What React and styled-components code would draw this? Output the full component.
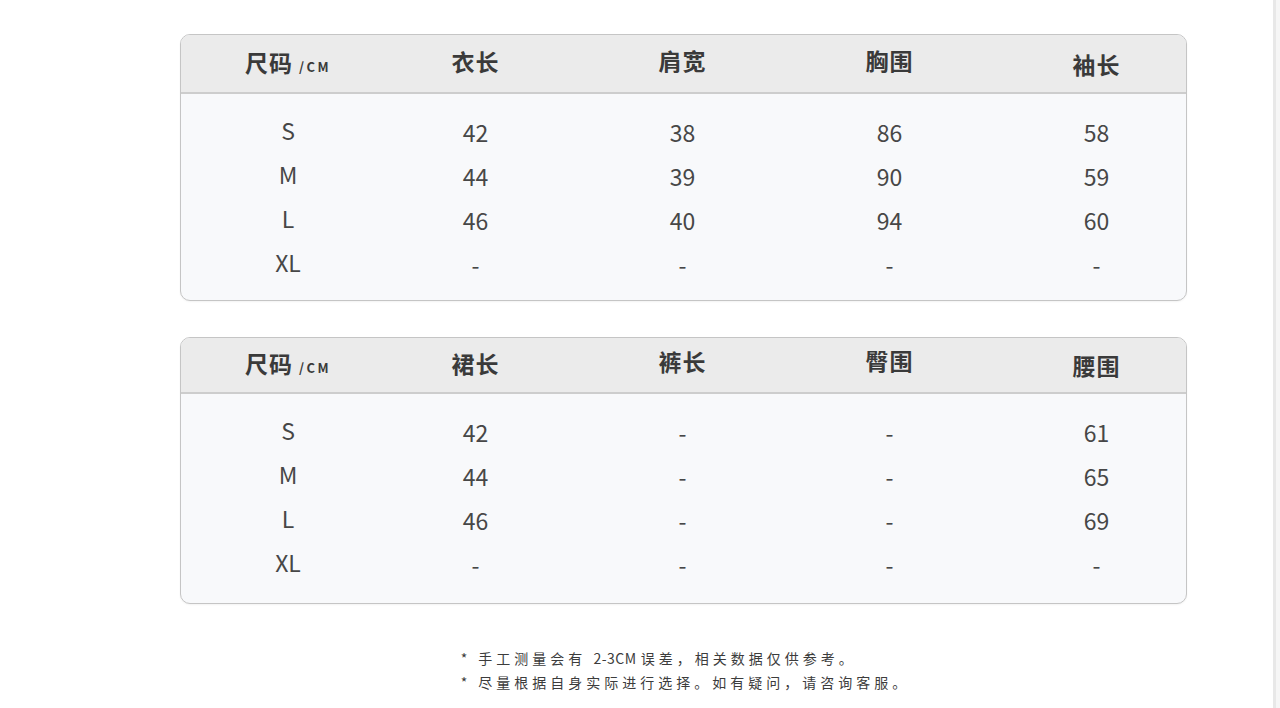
import React from "react";
import styled, { createGlobalStyle } from "styled-components";

const Global = createGlobalStyle`
  html, body { margin: 0; padding: 0; background: #ffffff; }
  body { font-family: "Noto Sans CJK SC", "Noto Sans", sans-serif; }
`;

const Page = styled.div`
  display: flex;
  width: 1280px;
  height: 708px;
  overflow: hidden;
  background: #ffffff;
`;

const Main = styled.main`
  flex: 1;
  padding: 34px 0 0 180px;
  display: flex;
  flex-direction: column;
  gap: 36px;
`;

const Strip = styled.div`
  width: 4px;
  border-left: 3px solid #e8e8e8;
  background: #f6f6f6;
`;

const Table = styled.section`
  width: 1007px;
  box-sizing: border-box;
  border: 1.5px solid #c5c5c5;
  border-radius: 10px;
  overflow: hidden;
  background: #f8f9fb;
  box-shadow: 0 1px 2px rgba(0, 0, 0, 0.05);
`;

const Grid = styled.div`
  display: grid;
  grid-template-columns: 168px 207px 207px 207px 207px;
  padding-left: 23px;
  align-items: center;
`;

const Head = styled(Grid)`
  height: ${(p) => p.$h}px;
  background: #ebebeb;
  border-bottom: 2px solid #cdcdcd;
  box-sizing: border-box;
  padding-bottom: 4px;
`;

const Body = styled.div`
  padding: 12px 0 ${(p) => p.$pb}px;
`;

const Row = styled(Grid)`
  height: 44px;
`;

const HeadCell = styled.div`
  text-align: center;
  font-size: 23px;
  font-weight: 700;
  color: #3a3a3a;
  letter-spacing: 1px;
  transform: translateY(${(p) => p.$dy || 0}px);
`;

const Unit = styled.span`
  font-size: 13px;
  font-weight: 700;
  letter-spacing: 2.5px;
  margin-left: 6px;
  color: #3a3a3a;
`;

const Cell = styled.div`
  text-align: center;
  font-size: 23px;
  color: #474747;
  line-height: 44px;
  padding-top: ${(p) => (p.$label ? 0 : 4)}px;
`;

const Footer = styled.div`
  width: 1007px;
  display: flex;
  justify-content: center;
  margin-top: 6px;
`;

const Notes = styled.div`
  font-size: 14px;
  line-height: 24px;
  letter-spacing: 4px;
  color: #3c3c3c;
  padding-left: 4px;
`;

const Code = styled.span`
  letter-spacing: 0.5px;
  margin-right: 4px;
`;

const tables = [
  {
    head: ["衣长", "肩宽", "胸围", "袖长"],
    dy: [-1, -2, -2, 2],
    hh: 59,
    pb: 18,
    rows: [
      ["S", "42", "38", "86", "58"],
      ["M", "44", "39", "90", "59"],
      ["L", "46", "40", "94", "60"],
      ["XL", "-", "-", "-", "-"],
    ],
  },
  {
    head: ["裙长", "裤长", "臀围", "腰围"],
    dy: [0, -2, -3, 2],
    hh: 56,
    pb: 21,
    rows: [
      ["S", "42", "-", "-", "61"],
      ["M", "44", "-", "-", "65"],
      ["L", "46", "-", "-", "69"],
      ["XL", "-", "-", "-", "-"],
    ],
  },
];

function SizeTable({ t }) {
  return (
    <Table>
      <Head $h={t.hh}>
        <HeadCell>
          尺码<Unit>/CM</Unit>
        </HeadCell>
        {t.head.map((h, i) => (
          <HeadCell key={h} $dy={t.dy[i]}>
            {h}
          </HeadCell>
        ))}
      </Head>
      <Body $pb={t.pb}>
        {t.rows.map((r) => (
          <Row key={r[0]}>
            {r.map((c, i) => (
              <Cell key={i} $label={i === 0}>
                {c}
              </Cell>
            ))}
          </Row>
        ))}
      </Body>
    </Table>
  );
}

export default function App() {
  return (
    <>
      <Global />
      <Page>
        <Main>
          {tables.map((t, i) => (
            <SizeTable key={i} t={t} />
          ))}
          <Footer>
            <Notes>
              <div>
                * 手工测量会有 <Code>2-3CM</Code>误差，相关数据仅供参考。
              </div>
              <div>* 尽量根据自身实际进行选择。如有疑问，请咨询客服。</div>
            </Notes>
          </Footer>
        </Main>
        <Strip />
      </Page>
    </>
  );
}
